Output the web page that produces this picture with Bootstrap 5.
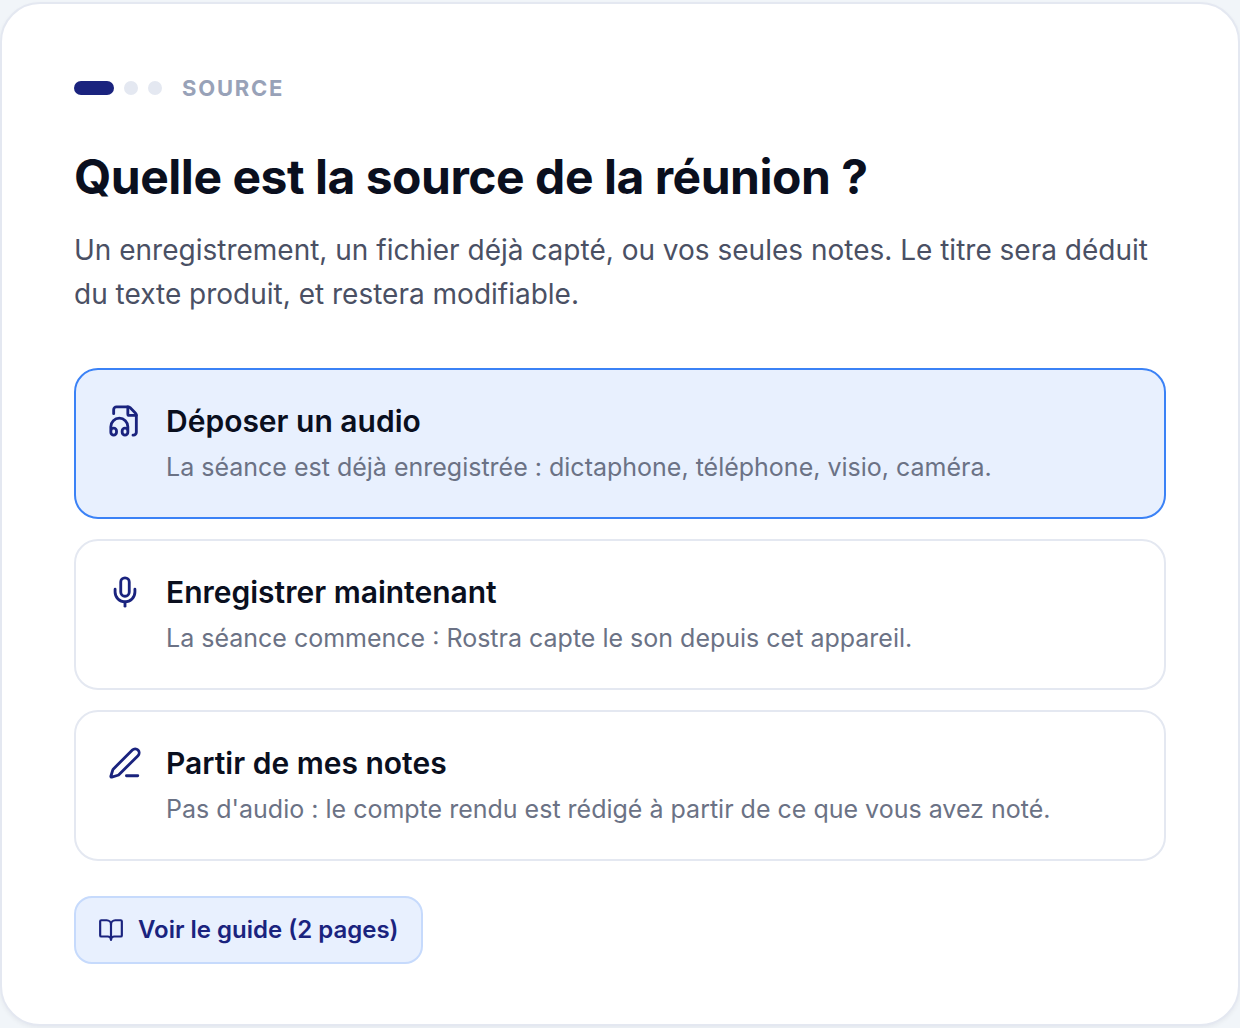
<!DOCTYPE html>
<html lang="fr">
<head>
<meta charset="utf-8">
<meta name="viewport" content="width=device-width, initial-scale=1">
<title>Source de la réunion</title>
<link href="https://cdn.jsdelivr.net/npm/bootstrap@5.3.0/dist/css/bootstrap.min.css" rel="stylesheet">
<style>
body { background: #f1f5f9; font-family: Inter, sans-serif; color: #0a0f1e; }
.panel { background: #fff; border: 2px solid #e4e8f1; border-radius: 40px; padding: 68px 72px 60px; margin: 2px 0; box-shadow: 0 2px 4px rgba(15, 23, 42, .05); }
.steps { gap: 10px; line-height: 32px; }
.dot { width: 14px; height: 14px; border-radius: 7px; background: #e4e8f1; }
.dot-on { width: 40px; background: #1a237e; }
.step-name { margin-left: 10px; font-size: 22px; font-weight: 700; letter-spacing: .08em; color: #98a2b8; }
.title { font-size: 48px; line-height: 60px; font-weight: 700; letter-spacing: -.01em; margin: 43px 0 21px; }
.intro { font-size: 28px; line-height: 44px; color: #4a5064; margin: 0 0 52px; }
.choices { gap: 20px; }
.choice { display: flex; align-items: flex-start; gap: 24px; width: 100%; padding: 30px 32px; text-align: left; background: #fff; border: 2px solid #e4e8f1; border-radius: 24px; color: #1a237e; }
.choice.active { background: #e8f0fe; border-color: #3b82f6; }
.choice svg { width: 34px; height: 34px; margin-top: 4px; flex: none; }
.choice-title { font-size: 30px; line-height: 42px; font-weight: 600; color: #0a0f1e; }
.choice-text { font-size: 25px; line-height: 40px; margin-top: 5px; color: #6b7285; }
.guide { margin-top: 35px; display: inline-flex; align-items: center; gap: 14px; padding: 14px 22px; font-size: 24px; line-height: 36px; font-weight: 600; color: #1a237e; background: #e8f0fe; border: 2px solid #c6dafc; border-radius: 18px; text-decoration: none; }
.guide svg { width: 26px; height: 26px; }
svg { fill: none; stroke: currentColor; stroke-width: 2; stroke-linecap: round; stroke-linejoin: round; }
</style>
</head>
<body>
<main class="panel">
  <div class="steps d-flex align-items-center">
    <span class="dot dot-on"></span><span class="dot"></span><span class="dot"></span>
    <span class="step-name">SOURCE</span>
  </div>
  <h1 class="title">Quelle est la source de la réunion ?</h1>
  <p class="intro">Un enregistrement, un fichier déjà capté, ou vos seules notes. Le titre sera déduit du texte produit, et restera modifiable.</p>
  <div class="choices d-flex flex-column">
    <button type="button" class="choice active">
      <svg viewBox="0 0 24 24" aria-hidden="true"><path d="M4 6.835V4a2 2 0 0 1 2-2h8a2.4 2.4 0 0 1 1.706.706l3.588 3.588A2.4 2.4 0 0 1 20 8v12a2 2 0 0 1-2 2h-.343"/><path d="M14 2v5a1 1 0 0 0 1 1h5"/><path d="M2 19a2 2 0 0 1 4 0v1a2 2 0 0 1-4 0v-4a6 6 0 0 1 12 0v4a2 2 0 0 1-4 0v-1a2 2 0 0 1 4 0"/></svg>
      <span class="d-flex flex-column"><span class="choice-title">Déposer un audio</span><span class="choice-text">La séance est déjà enregistrée : dictaphone, téléphone, visio, caméra.</span></span>
    </button>
    <button type="button" class="choice">
      <svg viewBox="0 0 24 24" aria-hidden="true"><path d="M12 19v3"/><path d="M19 10v2a7 7 0 0 1-14 0v-2"/><rect x="9" y="2" width="6" height="13" rx="3"/></svg>
      <span class="d-flex flex-column"><span class="choice-title">Enregistrer maintenant</span><span class="choice-text">La séance commence : Rostra capte le son depuis cet appareil.</span></span>
    </button>
    <button type="button" class="choice">
      <svg viewBox="0 0 24 24" aria-hidden="true"><path d="M13 21h8"/><path d="M21.174 6.812a1 1 0 0 0-3.986-3.987L3.842 16.174a2 2 0 0 0-.5.83l-1.321 4.352a.5.5 0 0 0 .623.622l4.353-1.32a2 2 0 0 0 .83-.497z"/></svg>
      <span class="d-flex flex-column"><span class="choice-title">Partir de mes notes</span><span class="choice-text">Pas d'audio : le compte rendu est rédigé à partir de ce que vous avez noté.</span></span>
    </button>
  </div>
  <a href="#" class="guide"><svg viewBox="0 0 24 24" aria-hidden="true"><path d="M12 7v14"/><path d="M3 18a1 1 0 0 1-1-1V4a1 1 0 0 1 1-1h5a4 4 0 0 1 4 4 4 4 0 0 1 4-4h5a1 1 0 0 1 1 1v13a1 1 0 0 1-1 1h-6a3 3 0 0 0-3 3 3 3 0 0 0-3-3z"/></svg>Voir le guide (2 pages)</a>
</main>
<script src="https://cdn.jsdelivr.net/npm/bootstrap@5.3.0/dist/js/bootstrap.bundle.min.js"></script>
</body>
</html>
